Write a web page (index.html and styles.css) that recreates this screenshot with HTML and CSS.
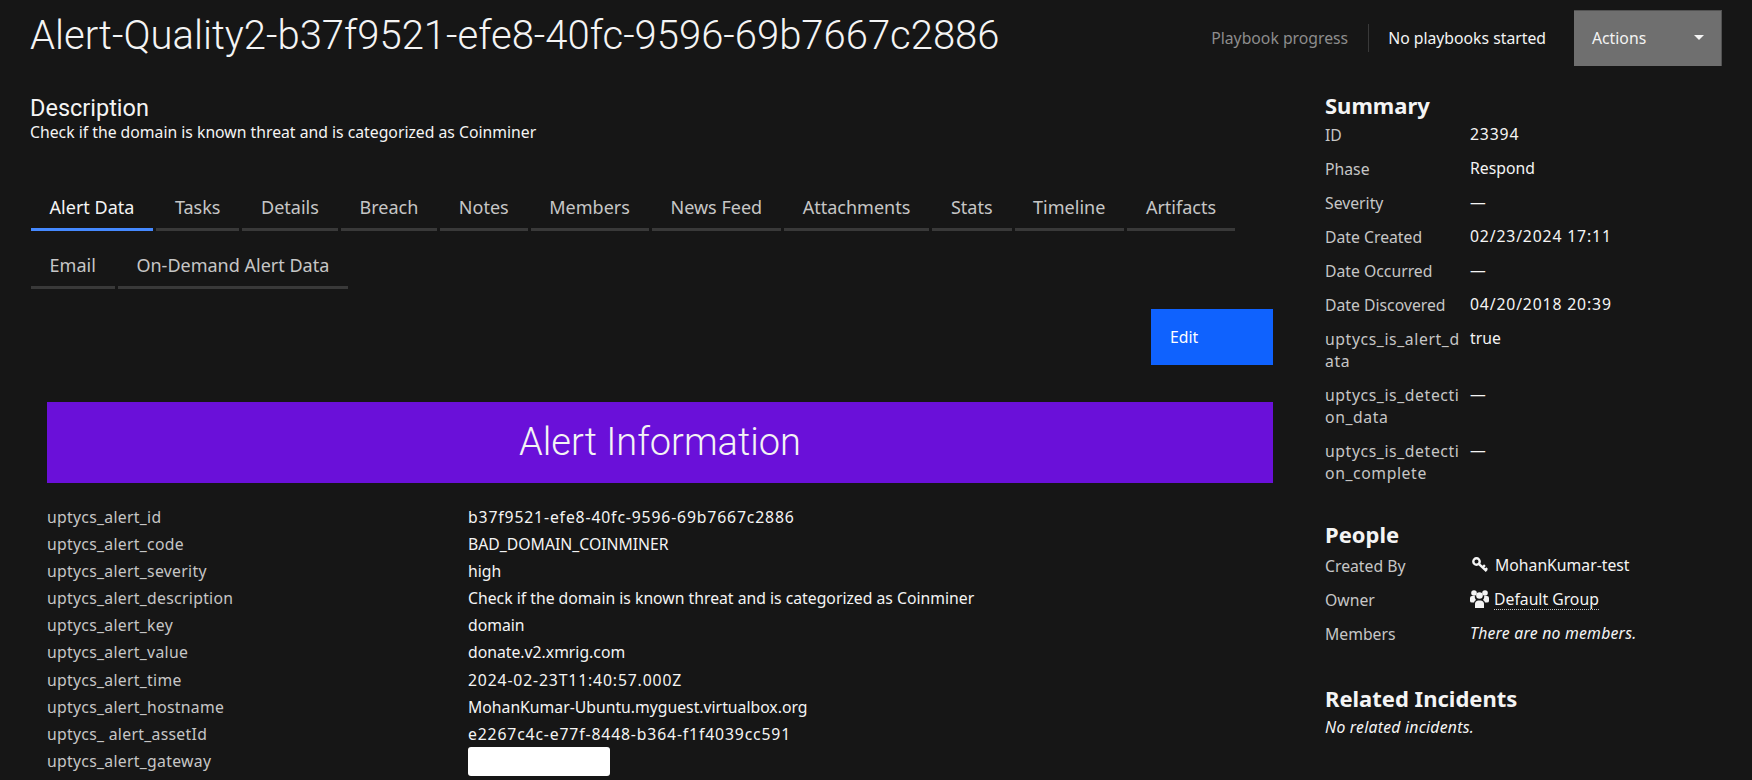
FILE: index.html
```html
<!DOCTYPE html>
<html>
  <head>
    <title>Alert-Quality2</title>
    <link rel="stylesheet" href="styles.css">
  </head>
  <body>
    <div class="header">
      <h1 class="title">Alert-Quality2-b37f9521-efe8-40fc-9596-69b7667c2886</h1>
      <div class="progress">
        <span class="progress-label">Playbook progress</span>
        <span class="progress-value">No playbooks started</span>
        <button class="actions-btn">
          <span>Actions</span>
          <span class="caret"></span>
        </button>
      </div>
    </div>
    <div class="content">
      <div class="main">
        <h2 class="desc-title">Description</h2>
        <p class="desc-text">Check if the domain is known threat and is categorized as Coinminer</p>

        <div class="tabs">
          <a class="tab active">Alert Data</a>
          <a class="tab">Tasks</a>
          <a class="tab">Details</a>
          <a class="tab">Breach</a>
          <a class="tab">Notes</a>
          <a class="tab">Members</a>
          <a class="tab">News Feed</a>
          <a class="tab">Attachments</a>
          <a class="tab">Stats</a>
          <a class="tab">Timeline</a>
          <a class="tab">Artifacts</a>
          <a class="tab">Email</a>
          <a class="tab">On-Demand Alert Data</a>
        </div>

        <div class="panel">
          <div class="edit-row">
            <button class="edit-btn">Edit</button>
          </div>
          <div class="banner">Alert Information</div>
          <div class="fields">
            <div class="field-label">uptycs_alert_id</div>
            <div class="field-value num">b37f9521-efe8-40fc-9596-69b7667c2886</div>
            <div class="field-label">uptycs_alert_code</div>
            <div class="field-value">BAD_DOMAIN_COINMINER</div>
            <div class="field-label">uptycs_alert_severity</div>
            <div class="field-value">high</div>
            <div class="field-label">uptycs_alert_description</div>
            <div class="field-value">Check if the domain is known threat and is categorized as Coinminer</div>
            <div class="field-label">uptycs_alert_key</div>
            <div class="field-value">domain</div>
            <div class="field-label">uptycs_alert_value</div>
            <div class="field-value">donate.v2.xmrig.com</div>
            <div class="field-label">uptycs_alert_time</div>
            <div class="field-value num">2024-02-23T11:40:57.000Z</div>
            <div class="field-label">uptycs_alert_hostname</div>
            <div class="field-value">MohanKumar-Ubuntu.myguest.virtualbox.org</div>
            <div class="field-label">uptycs_ alert_assetId</div>
            <div class="field-value num">e2267c4c-e77f-8448-b364-f1f4039cc591</div>
            <div class="field-label">uptycs_alert_gateway</div>
            <div class="field-value"><div class="redacted"></div></div>
          </div>
        </div>
      </div>

      <div class="sidebar">
        <h3 class="side-title">Summary</h3>
        <dl class="side-list">
          <dt>ID</dt><dd class="num">23394</dd>
          <dt>Phase</dt><dd>Respond</dd>
          <dt>Severity</dt><dd>—</dd>
          <dt>Date Created</dt><dd class="num">02/23/2024 17:11</dd>
          <dt>Date Occurred</dt><dd>—</dd>
          <dt>Date Discovered</dt><dd class="num">04/20/2018 20:39</dd>
          <dt class="long">uptycs_is_alert_d<br>ata</dt><dd>true</dd>
          <dt class="long">uptycs_is_detecti<br>on_data</dt><dd>—</dd>
          <dt class="long">uptycs_is_detecti<br>on_complete</dt><dd>—</dd>
        </dl>

        <h3 class="side-title people">People</h3>
        <dl class="side-list">
          <dt>Created By</dt>
          <dd class="with-icon">
            <svg class="icon key" viewBox="0 0 16 16"><circle cx="4.500" cy="4.500" r="3.200" fill="none" stroke="#f4f4f4" stroke-width="2.400"/><path d="M6.800 6.800l7.800 7.400M10.500 10.500l2.400-2.400M13.200 13.200l2-2" fill="none" stroke="#f4f4f4" stroke-width="2.400"/></svg>
            MohanKumar-test
          </dd>
          <dt>Owner</dt>
          <dd class="with-icon tight">
            <svg class="icon group" viewBox="0 0 19 18"><circle cx="4" cy="3" r="2.800" fill="#f4f4f4"/><circle cx="15" cy="3" r="2.800" fill="#f4f4f4"/><circle cx="9.500" cy="5.500" r="3.300" fill="#f4f4f4"/><path d="M0 11V8q0-2 2-2h2.800q-.4 2.500 1.200 4-1.500.5-2 2.500H2q-2 0-2-1.500zM19 11V8q0-2-2-2h-2.800q.4 2.500-1.200 4 1.500.5 2 2.500H17q2 0 2-1.500z" fill="#f4f4f4"/><path d="M5 18v-4q0-3 3-3.500h3q3 .5 3 3.500v4z" fill="#f4f4f4"/></svg>
            <a class="owner-link">Default Group</a>
          </dd>
          <dt>Members</dt><dd class="empty">There are no members.</dd>
        </dl>

        <h3 class="side-title related">Related Incidents</h3>
        <p class="empty">No related incidents.</p>
      </div>
    </div>
  </body>
</html>
```

FILE: styles.css
```css
* {
  box-sizing: border-box;
}

html,
body {
  height: 100%;
}

body {
  margin: 0;
  background-color: #161616;
  color: #f4f4f4;
  font-family: "Noto Sans", "Roboto", sans-serif;
  font-size: 15.750px;
  overflow: hidden;
}

.header {
  display: flex;
  justify-content: space-between;
  align-items: flex-start;
  padding: 10px 30px 0 30px;
}

.title {
  margin: 0;
  font-family: "Roboto", sans-serif;
  font-size: 40px;
  font-weight: 300;
  line-height: 52px;
}

.progress {
  display: flex;
  align-items: center;
  height: 56px;
}

.progress-label {
  color: #8d8d8d;
  padding-right: 20px;
  margin-bottom: 1px;
  line-height: 28px;
  border-right: 1px solid #393939;
}

.progress-value {
  padding: 0 28px 0 19px;
  margin-bottom: 1px;
}

.actions-btn {
  display: flex;
  justify-content: space-between;
  align-items: center;
  width: 148px;
  height: 56px;
  padding: 0 17px 2px 18px;
  background-color: #6f6f6f;
  border: none;
  border-top: 1px solid #525252;
  border-right: 1px solid #525252;
  color: #f4f4f4;
  font-family: inherit;
  font-size: inherit;
}

.caret {
  width: 0;
  height: 0;
  border-left: 5px solid transparent;
  border-right: 5px solid transparent;
  border-top: 5px solid #f4f4f4;
}

.content {
  display: flex;
  justify-content: space-between;
}

.main {
  width: 1273px;
  padding: 27px 0 0 30px;
}

.desc-title {
  margin: 0;
  font-family: "Roboto", sans-serif;
  font-size: 23.500px;
  font-weight: 400;
  line-height: 30px;
}

.desc-text {
  margin: 0;
  line-height: 18px;
}

.tabs {
  display: flex;
  flex-wrap: wrap;
  margin: 32px 0 0 1px;
  column-gap: 3px;
  row-gap: 0;
}

.tab {
  padding: 0 19px 9px 18.600px;
  height: 58px;
  display: flex;
  align-items: flex-end;
  font-size: 18px;
  line-height: 24px;
  color: #c6c6c6;
  border-bottom: 3px solid #393939;
}

.tab.active {
  color: #f4f4f4;
  border-bottom-color: #4589ff;
}

.panel {
  padding-left: 17px;
}

.edit-row {
  display: flex;
  justify-content: flex-end;
  padding-top: 20px;
}

.edit-btn {
  width: 122px;
  height: 56px;
  padding: 0 19px;
  text-align: left;
  background-color: #0f62fe;
  border: none;
  color: #fff;
  font-family: inherit;
  font-size: inherit;
}

.banner {
  margin-top: 37px;
  height: 81px;
  line-height: 81px;
  text-align: center;
  background-color: #6a10d9;
  color: #f4f4f4;
  font-family: "Roboto", sans-serif;
  font-size: 38px;
  font-weight: 300;
}

.fields {
  display: grid;
  grid-template-columns: 421px 1fr;
  grid-auto-rows: 27.100px;
  padding-top: 21px;
  line-height: 27px;
}

.field-label {
  color: #c6c6c6;
  letter-spacing: 0.300px;
}

.num {
  letter-spacing: 0.850px;
}

.redacted {
  width: 142px;
  height: 29px;
  margin-top: -1px;
  background-color: #fff;
  border-radius: 3px;
}

.sidebar {
  width: 427px;
  margin-top: 27px;
  flex-shrink: 0;
}

.side-title {
  margin: 0;
  font-size: 22px;
  font-weight: 700;
  line-height: 24px;
}

.side-title.people {
  margin: 33px 0 2px;
}

.side-title.related {
  margin: 36px 0 6px;
}

.side-list {
  display: grid;
  grid-template-columns: 135px 1fr;
  column-gap: 10px;
  margin: 0;
  line-height: 22px;
}

.side-list dt {
  color: #c6c6c6;
  padding: 7px 0 5px;
}

.side-list dt.long {
  white-space: nowrap;
  letter-spacing: 0.600px;
}

.side-list dd {
  margin: 0;
  padding: 6px 0;
}

.with-icon {
  display: flex;
  align-items: center;
  gap: 7px;
}

.with-icon.tight {
  gap: 5px;
}

.icon.key {
  width: 16px;
  height: 16px;
  margin-left: 2px;
}

.icon.group {
  width: 19px;
  height: 18px;
}

.owner-link {
  border-bottom: 1px dotted #c6c6c6;
  line-height: 20px;
}

.empty {
  margin: 0;
  font-style: italic;
  letter-spacing: 0.250px;
}
```
